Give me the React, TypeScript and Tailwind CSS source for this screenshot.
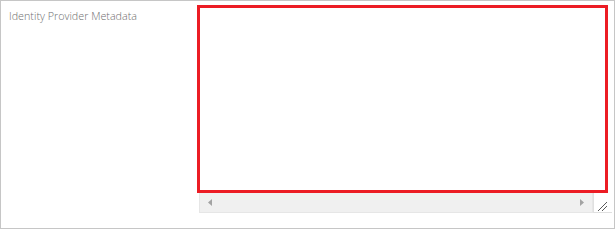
import React from 'react';

const App: React.FC = () => {
  return (
    <div className="w-[616px] h-[230px] bg-white">
      <div className="flex w-[615px] h-[229px] border border-[#c6c6c6] bg-white">
        <div className="w-[196px] shrink-0 pl-[8px] pt-[1px]">
          <span className="text-[10.75px] leading-[18px] font-light text-[#6f6f6f] [font-family:'Open_Sans',sans-serif]">
            Identity Provider Metadata
          </span>
        </div>
        <div className="flex flex-col pt-[4px]">
          <div className="w-[411px] h-[188px] border-[3px] border-[#ec1c24] bg-white" />
          <div className="flex ml-[2px] w-[413px] h-[20px]">
            <div className="flex flex-1 items-center justify-between px-[8px] bg-[#f0f0f0] border border-t-0 border-[#e6e6e6]">
              <svg width="4" height="7" viewBox="0 0 4 7">
                <path d="M4 0 L0 3.5 L4 7 Z" fill="#a3a3a3" />
              </svg>
              <svg width="4" height="7" viewBox="0 0 4 7">
                <path d="M0 0 L4 3.5 L0 7 Z" fill="#a3a3a3" />
              </svg>
            </div>
            <div className="relative w-[19px] h-[20px] bg-white border-l border-b border-[#e0e0e0]">
              <svg className="absolute left-[3px] top-[8px]" width="11" height="11" viewBox="0 0 11 11">
                <path d="M1 10 L10 1" stroke="#5a5a5a" strokeWidth="1" />
                <path d="M5 10 L10 5" stroke="#5a5a5a" strokeWidth="1" />
              </svg>
            </div>
          </div>
        </div>
      </div>
    </div>
  );
};

export default App;
